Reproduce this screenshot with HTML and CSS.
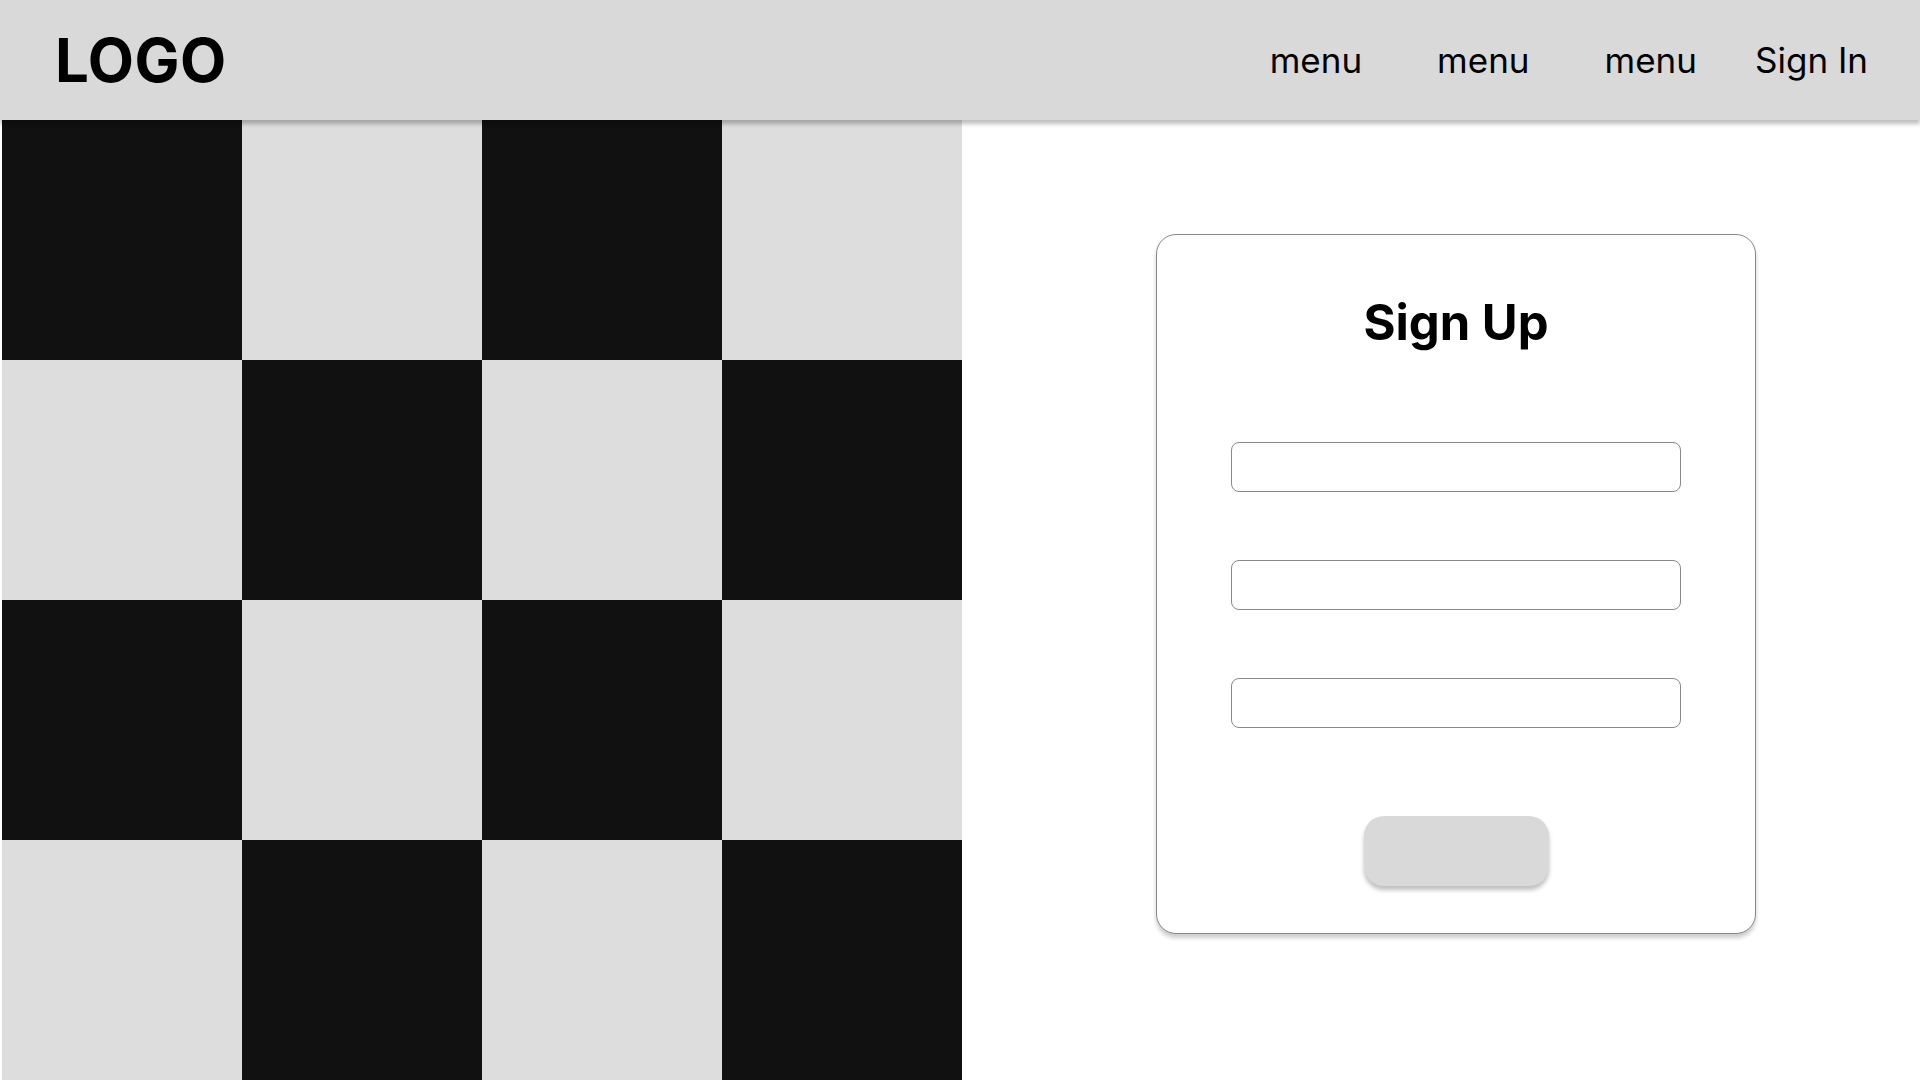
FILE: index.html
```html
<!DOCTYPE html>
<html lang="en">
<head>
<meta charset="utf-8">
<title>Sign Up</title>
<link rel="stylesheet" href="styles.css">
</head>
<body>
<header class="topbar">
  <div class="logo">LOGO</div>
  <nav class="nav">
    <a class="nav-link" href="#">menu</a>
    <a class="nav-link" href="#">menu</a>
    <a class="nav-link" href="#">menu</a>
    <a class="nav-link nav-signin" href="#">Sign In</a>
  </nav>
</header>
<main class="main">
  <section class="checker">
    <div class="cell dark"></div><div class="cell light"></div><div class="cell dark"></div><div class="cell light"></div>
    <div class="cell light"></div><div class="cell dark"></div><div class="cell light"></div><div class="cell dark"></div>
    <div class="cell dark"></div><div class="cell light"></div><div class="cell dark"></div><div class="cell light"></div>
    <div class="cell light"></div><div class="cell dark"></div><div class="cell light"></div><div class="cell dark"></div>
  </section>
  <section class="panel">
    <form class="card">
      <h1 class="title">Sign Up</h1>
      <div class="fields">
        <input class="field" type="text">
        <input class="field" type="email">
        <input class="field" type="password">
      </div>
      <button class="submit" type="button"></button>
    </form>
  </section>
</main>
</body>
</html>
```
FILE: styles.css
```css
* { box-sizing: border-box; }
html, body { margin: 0; padding: 0; }
body {
  width: 1920px;
  height: 1080px;
  overflow: hidden;
  background: #ffffff;
  font-family: Inter, "Liberation Sans", sans-serif;
  color: #000;
}
.topbar {
  position: relative;
  z-index: 2;
  height: 120px;
  background: #d9d9d9;
  box-shadow: 0 4px 4px rgba(0, 0, 0, 0.25);
  display: flex;
  align-items: center;
  justify-content: space-between;
  padding: 0 52px 0 55px;
}
.logo {
  font-size: 60px;
  font-weight: 700;
  letter-spacing: 0.5px;
}
.nav {
  display: flex;
  align-items: center;
  gap: 75px;
}
.nav-link {
  font-size: 35px;
  color: #000;
  text-decoration: none;
}
.nav-signin { margin-left: -17px; }
.main {
  display: flex;
  height: 960px;
  padding-left: 2px;
}
.checker {
  display: grid;
  grid-template-columns: repeat(4, 240px);
  grid-template-rows: repeat(4, 240px);
  width: 960px;
  flex: none;
}
.dark { background: #111111; }
.light { background: #dddddd; }
.panel {
  flex: 1;
  display: flex;
  justify-content: center;
  align-items: flex-start;
  padding: 114px 0 0 30px;
}
.card {
  width: 600px;
  height: 700px;
  border: 1px solid #888888;
  border-radius: 20px;
  background: #fff;
  box-shadow: 0 4px 4px rgba(0, 0, 0, 0.2);
  display: flex;
  flex-direction: column;
  align-items: center;
  padding-top: 58px;
}
.title {
  margin: 0;
  font-size: 49px;
  line-height: 60px;
  font-weight: 700;
}
.fields {
  display: flex;
  flex-direction: column;
  gap: 68px;
  margin-top: 89px;
}
.field {
  width: 450px;
  height: 50px;
  border: 1px solid #888888;
  border-radius: 8px;
  background: #fff;
  margin: 0;
  padding: 0 12px;
  outline: none;
}
.submit {
  margin-top: 88px;
  width: 185px;
  height: 70px;
  border: none;
  border-radius: 20px;
  background: #d9d9d9;
  box-shadow: 0 4px 4px rgba(0, 0, 0, 0.25);
}
```
